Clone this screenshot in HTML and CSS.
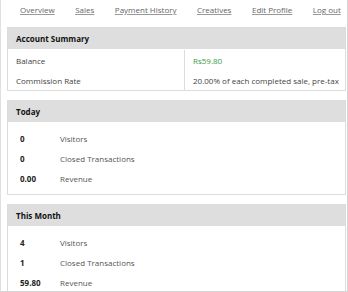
FILE: index.html
```html
<!DOCTYPE html>
<html>
<head>
<meta charset="utf-8">
<link rel="stylesheet" href="styles.css">
</head>
<body>
<div class="frame">
  <nav class="nav">
    <a href="#">Overview</a>
    <a href="#">Sales</a>
    <a href="#">Payment History</a>
    <a href="#">Creatives</a>
    <a href="#">Edit Profile</a>
    <a href="#">Log out</a>
  </nav>

  <section class="panel summary">
    <div class="panel-head">Account Summary</div>
    <div class="summary-body">
      <div class="kv">
        <div class="k">Balance</div>
        <div class="v money">Rs59.80</div>
      </div>
      <div class="kv">
        <div class="k">Commission Rate</div>
        <div class="v">20.00% of each completed sale, pre-tax</div>
      </div>
    </div>
  </section>

  <section class="panel">
    <div class="panel-head">Today</div>
    <div class="stats">
      <div class="stat"><span class="num">0</span><span class="lbl">Visitors</span></div>
      <div class="stat"><span class="num">0</span><span class="lbl">Closed Transactions</span></div>
      <div class="stat"><span class="num">0.00</span><span class="lbl">Revenue</span></div>
    </div>
  </section>

  <section class="panel">
    <div class="panel-head">This Month</div>
    <div class="stats">
      <div class="stat"><span class="num">4</span><span class="lbl">Visitors</span></div>
      <div class="stat"><span class="num">1</span><span class="lbl">Closed Transactions</span></div>
      <div class="stat"><span class="num">59.80</span><span class="lbl">Revenue</span></div>
    </div>
  </section>
</div>
</body>
</html>
```

FILE: styles.css
```css
html, body {
  margin: 0;
  padding: 0;
  background: #fff;
}
body {
  font-family: "Open Sans", "Noto Sans", sans-serif;
  font-size: 8px;
  color: #444;
  white-space: nowrap;
}
.frame {
  width: 348px;
  height: 292px;
  box-sizing: border-box;
  border: 1px solid #d4d4d4;
  border-top: none;
  border-left-color: #e0e0e0;
  padding: 0 1px 0 6px;
  overflow: hidden;
}
.nav {
  display: flex;
  gap: 20.5px;
  padding-left: 13px;
  height: 19px;
  align-items: center;
}
.nav a {
  color: #666;
  text-decoration: underline;
  text-decoration-color: #999;
}
.panel {
  border: 1px solid #dcdcdc;
  margin-top: 8px;
}
.panel + .panel {
  margin-top: 9px;
}
.panel-head {
  background: #dedede;
  height: 21px;
  display: flex;
  align-items: center;
  padding-left: 8px;
  font-weight: 700;
  color: #111;
}
.summary-body {
  padding: 1px 0 0;
}
.kv {
  display: grid;
  grid-template-columns: 177px 1fr;
  height: 20px;
}
.kv .k, .kv .v {
  display: flex;
  align-items: center;
  overflow: hidden;
}
.kv .k {
  padding-left: 8px;
  border-right: 1px solid #dcdcdc;
}
.kv .v {
  padding-left: 8px;
}
.money {
  color: #3c9a47;
}
.stats {
  padding: 7px 0 6px;
}
.stat {
  display: flex;
  align-items: center;
  height: 19.7px;
}
.num {
  width: 40px;
  padding-left: 12px;
  font-weight: 700;
  color: #222;
}
.lbl {
  color: #555;
}
```
